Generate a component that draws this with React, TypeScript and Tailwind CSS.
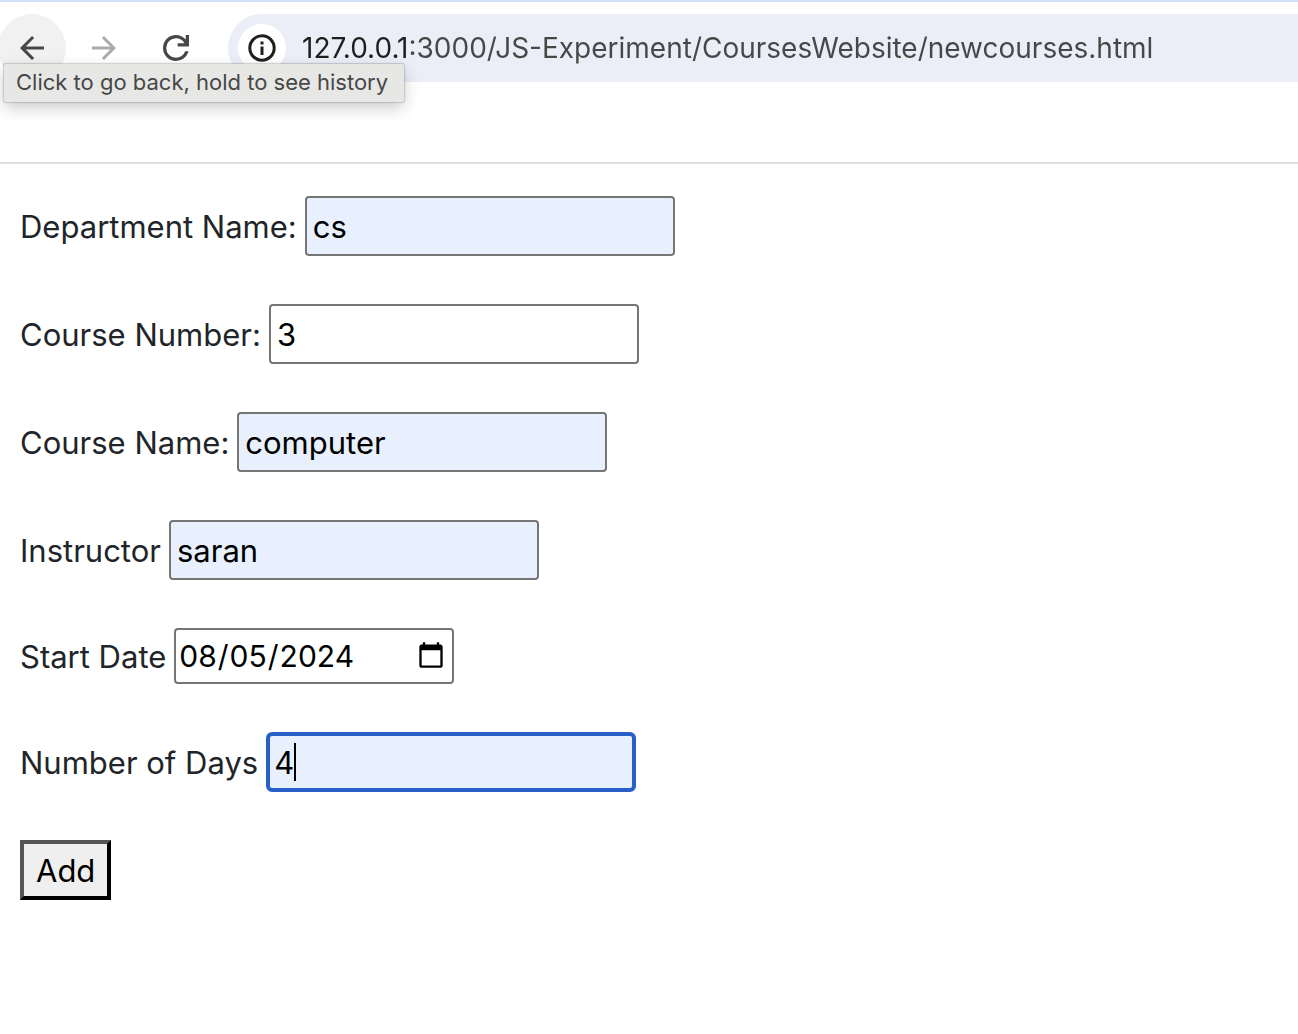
import React from "react";

type FieldProps = {
  id: string;
  label: string;
  value: string;
  filled?: boolean;
};

function Field({ id, label, value, filled = false }: FieldProps) {
  return (
    <div className="flex items-center gap-2">
      <label htmlFor={id} className="pt-0.5">{label}</label>
      <input
        id={id}
        type="text"
        defaultValue={value}
        className={
          "h-15 w-[370px] rounded-sm border-2 border-[#767676] px-1.5 text-black outline-none " +
          (filled ? "bg-[#e8f0fe]" : "bg-white")
        }
      />
    </div>
  );
}

function BrowserBar() {
  return (
    <header className="border-t-2 border-b-2 border-t-[#d3e1fb] border-b-[#e0e0e0] pt-3 pb-20">
      <div className="relative flex h-[68px] items-center">
        <button
          type="button"
          aria-label="Back"
          aria-describedby="back-tip"
          className="-ml-0.5 flex size-17 shrink-0 items-center justify-center rounded-full bg-[#f1f1f1] text-[#474747]"
        >
          <svg viewBox="160 -800 640 640" className="size-6" fill="currentColor">
            <path d="M313-440l224 224-57 56-320-320 320-320 57 56-224 224h487v80H313Z" />
          </svg>
        </button>
        <button
          type="button"
          aria-label="Forward"
          className="ml-1 flex size-17 shrink-0 items-center justify-center text-[#ababab]"
        >
          <svg viewBox="160 -800 640 640" className="size-6" fill="currentColor">
            <path d="M647-440H160v-80h487L423-744l57-56 320 320-320 320-57-56 224-224Z" />
          </svg>
        </button>
        <button
          type="button"
          aria-label="Reload"
          className="ml-1 flex size-17 shrink-0 items-center justify-center text-[#474747]"
        >
          <svg viewBox="160 -800 640 640" className="size-6.5" fill="currentColor">
            <path d="M480-160q-134 0-227-93t-93-227q0-134 93-227t227-93q69 0 132 28.500T720-690v-110h80v280H520v-80h168q-32-56-87.500-88T480-720q-100 0-170 70t-70 170q0 100 70 170t170 70q77 0 139-44t87-116h84q-28 106-114 173t-196 67Z" />
          </svg>
        </button>
        <div className="ml-4.5 flex h-full flex-1 items-center rounded-l-full bg-[#ebeef7] pl-2.5">
          <button
            type="button"
            aria-label="Site information"
            className="flex size-12 shrink-0 items-center justify-center rounded-full bg-white text-[#1f1f1f]"
          >
            <svg viewBox="0 0 28 28" className="size-7" fill="none" stroke="currentColor" strokeWidth="3">
              <circle cx="14" cy="14" r="12.2" />
              <path d="M14 12.500V21M14 7.600v3" />
            </svg>
          </button>
          <input
            type="text"
            aria-label="Address"
            defaultValue="127.0.0.1:3000/JS-Experiment/CoursesWebsite/newcourses.html"
            className="ml-4 min-w-0 flex-1 bg-[linear-gradient(to_right,#1f1f1f_108px,#474747_108px)] bg-clip-text text-[28px] leading-10 text-transparent outline-none"
          />
        </div>
        <div
          id="back-tip"
          role="tooltip"
          className="absolute top-[50px] left-1 rounded-xs bg-[#e7e7e5] pt-[3px] pr-4 pb-[5px] pl-3 text-[22px] leading-[30px] whitespace-nowrap text-[#474747] shadow-[0_0_1px_1px_rgba(0,0,0,0.16),0_6px_16px_rgba(0,0,0,0.2)]"
        >
          Click to go back, hold to see history
        </div>
      </div>
    </header>
  );
}

export default function App() {
  return (
    <div className="min-h-screen bg-white font-['Inter',sans-serif]">
      <BrowserBar />
      <form
        className="flex flex-col items-start gap-12 px-5 py-8 text-[31px] leading-12 text-[#212529]"
        onSubmit={(e) => e.preventDefault()}
      >
        <Field id="department" label="Department Name:" value="cs" filled />
        <Field id="number" label="Course Number:" value="3" />
        <Field id="course" label="Course Name:" value="computer" filled />
        <Field id="instructor" label="Instructor" value="saran" filled />
        <div className="flex items-center gap-2">
          <label htmlFor="start" className="pt-0.5">Start Date</label>
          <input
            id="start"
            type="date"
            defaultValue="2024-08-05"
            className="h-14 w-[280px] rounded-sm border-2 border-[#767676] bg-white pr-1 pl-0.5 text-[30px] text-black outline-none"
          />
        </div>
        <div className="flex items-center gap-2">
          <label htmlFor="days" className="pt-0.5">Number of Days</label>
          <div className="relative">
            <input
              id="days"
              type="text"
              defaultValue="4"
              className="block h-15 w-[370px] rounded-md border-4 border-[#2860c8] bg-[#e8f0fe] px-1 text-black caret-transparent outline-none"
            />
            <span className="absolute top-[11px] left-7 h-[38px] w-0.5 bg-black" />
          </div>
        </div>
        <button
          type="submit"
          className="h-15 border-4 border-t-[#555] border-r-black border-b-black border-l-[#555] bg-[#efefef] px-3 pt-0.5 text-black"
        >
          Add
        </button>
      </form>
    </div>
  );
}
